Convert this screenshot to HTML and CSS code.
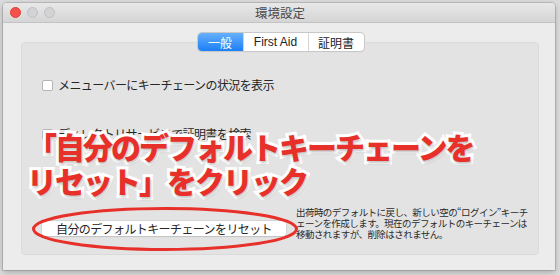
FILE: index.html
```html
<!DOCTYPE html>
<html lang="ja">
<head>
<meta charset="utf-8">
<link rel="stylesheet" href="styles.css">
</head>
<body>
<div class="window">
  <div class="titlebar">
    <div class="lights">
      <span class="light red"></span>
      <span class="light gray"></span>
      <span class="light gray"></span>
    </div>
    <div class="title">環境設定</div>
  </div>
  <div class="content">
    <div class="tabs">
      <span class="tab active">一般</span>
      <span class="tab">First Aid</span>
      <span class="tab">証明書</span>
    </div>
    <div class="box">
      <label class="check"><span class="cb"></span>メニューバーにキーチェーンの状況を表示</label>
      <label class="check second"><span class="cb"></span>ディレクトリサービスで証明書を検索</label>
      <div class="reset-row">
        <div class="btn-wrap">
          <button class="btn">自分のデフォルトキーチェーンをリセット</button>
          <svg class="ring" width="268" height="46" viewBox="0 0 268 46"><ellipse cx="134" cy="23" rx="131.5" ry="20.5" fill="none" stroke="#e8302a" stroke-width="3"/></svg>
        </div>
        <p class="desc">出荷時のデフォルトに戻し、新しい空の“ログイン”キーチ<br>ェーンを作成します。現在のデフォルトのキーチェーンは<br>移動されますが、削除はされません。</p>
      </div>
    </div>
    <div class="callout">「自分のデフォルトキーチェーンを<br>リセット」をクリック</div>
  </div>
</div>
</body>
</html>
```
FILE: styles.css
```css
html, body {
  margin: 0;
  padding: 0;
}
body {
  width: 560px;
  height: 275px;
  overflow: hidden;
  background: #dcdcdc;
  font-family: "Liberation Sans", "Noto Sans CJK JP", sans-serif;
}
.window {
  margin: 3px 5px 0 3px;
  width: 552px;
  height: 267px;
  background: #ececec;
  border-radius: 4px 4px 0 0;
  box-shadow: 0 0 0 1px rgba(0,0,0,0.12), 0 2px 6px rgba(0,0,0,0.25);
  display: flex;
  flex-direction: column;
  overflow: hidden;
}
.titlebar {
  height: 19px;
  flex: none;
  background: linear-gradient(#e9e8e9, #d6d5d6);
  border-bottom: 1px solid #c3c3c3;
  display: flex;
  align-items: center;
  position: relative;
}
.lights {
  display: flex;
  gap: 6px;
  padding-left: 7px;
}
.light {
  width: 11px;
  height: 11px;
  border-radius: 50%;
  box-sizing: border-box;
}
.red { background: #f5514b; border: 1px solid #d9403b; }
.gray { background: #d3d2d4; border: 1px solid #bfbfc1; }
.title {
  flex: 1;
  text-align: center;
  margin-right: 50px;
  font-size: 12.5px;
  color: #4a4a4a;
  font-family: "Noto Sans CJK JP", sans-serif;
}
.content {
  position: relative;
  flex: 1;
  padding: 10px 16px 15px 18px;
  display: flex;
  flex-direction: column;
}
.tabs {
  align-self: center;
  display: flex;
  height: 18px;
  margin-left: 1px;
  border-radius: 4px;
  background: #fff;
  box-shadow: 0 0 0 1px #c8c8c8, 0 1px 1px rgba(0,0,0,0.12);
  position: relative;
  z-index: 1;
  font-family: "Liberation Sans", "Noto Sans CJK JP", sans-serif;
  font-size: 12px;
  color: #222;
}
.tab {
  display: flex;
  align-items: center;
  justify-content: center;
  height: 18px;
  border-left: 1px solid #d4d4d4;
}
.tab:nth-child(1) { width: 45px; border-left: none; }
.tab:nth-child(2) { width: 64px; }
.tab:nth-child(3) { width: 55px; }
.tab.active {
  color: #fff;
  background: linear-gradient(#66b0fb, #1c7ff6);
  border-radius: 4px 0 0 4px;
}
.box {
  flex: 1;
  margin-top: -9px;
  background: #e3e3e3;
  border: 1px solid #dadada;
  border-radius: 4px;
  padding: 35px 0 0 20px;
  display: flex;
  flex-direction: column;
  font-family: "Noto Sans CJK JP", sans-serif;
  font-size: 12px;
  color: #262626;
}
.check {
  display: flex;
  align-items: center;
  gap: 5px;
  height: 14px;
  line-height: 14px;
  letter-spacing: -0.6px;
}
.check.second { margin-top: 35px; }
.cb {
  width: 11px;
  height: 11px;
  flex: none;
  box-sizing: border-box;
  background: #fff;
  border: 1px solid #b5b5b5;
  border-radius: 2px;
}
.reset-row {
  margin-top: 71px;
  display: flex;
  align-items: flex-start;
  gap: 10px;
}
.btn-wrap {
  position: relative;
  margin-top: 9px;
}
.btn {
  display: block;
  width: 244px;
  height: 15px;
  padding: 0;
  background: #fff;
  border: none;
  border-radius: 3px;
  box-shadow: 0 0 0 0.5px #c6c6c6, 0 1px 1px rgba(0,0,0,0.15);
  font-family: "Noto Sans CJK JP", sans-serif;
  font-size: 12px;
  line-height: 15px;
  letter-spacing: -0.6px;
  color: #262626;
}
.ring {
  position: absolute;
  left: -11px;
  top: -15px;
}
.desc {
  margin: 0;
  margin-top: -5px;
  font-size: 9.5px;
  line-height: 11px;
  letter-spacing: -0.55px;
  color: #2a2a2a;
  white-space: nowrap;
}
.callout {
  position: absolute;
  left: 24px;
  top: 106px;
  font-family: "Noto Sans CJK JP", sans-serif;
  font-weight: 900;
  font-size: 30px;
  line-height: 34px;
  color: #e8302a;
  -webkit-text-stroke: 6px #fff;
  paint-order: stroke fill;
  text-shadow: 1px 2px 3px rgba(0,0,0,0.25);
  letter-spacing: -2px;
  white-space: nowrap;
}
```
